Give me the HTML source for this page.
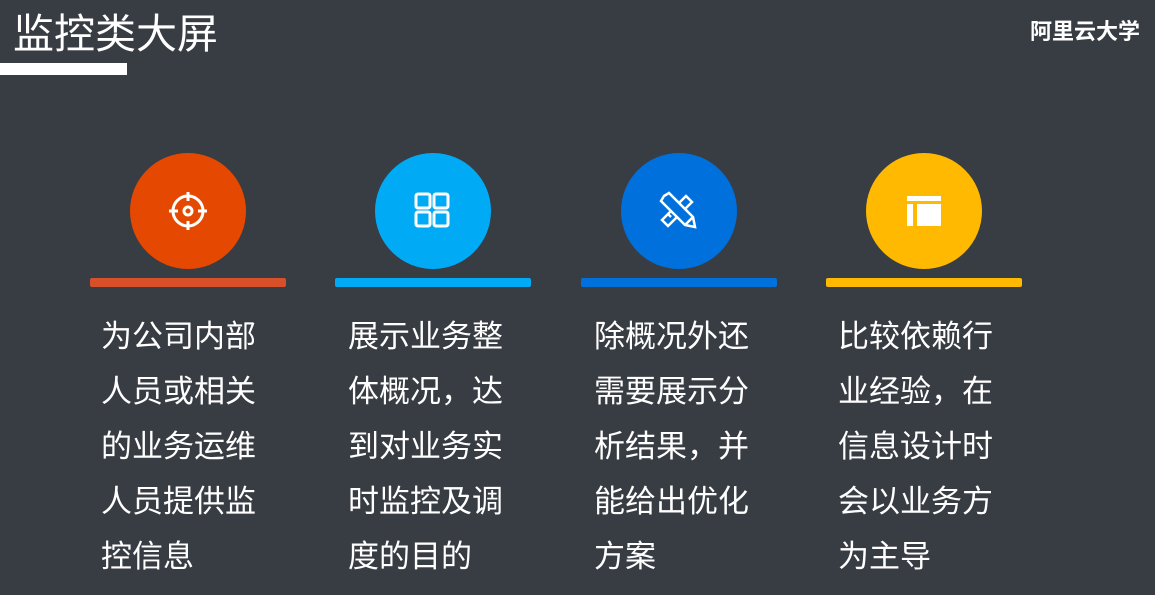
<!DOCTYPE html><html><head><meta charset="utf-8"><style>
body{margin:0;width:1155px;height:595px;background:#383c43;overflow:hidden;position:relative;font-family:"Liberation Sans","Noto Sans CJK SC",sans-serif;color:#fff}
.t{position:absolute;left:13px;top:0px;font-size:41px}
.ul{position:absolute;left:0;top:63px;width:127px;height:12px;background:#fff}
.br{position:absolute;right:15px;top:14px;font-size:22px;font-weight:bold}
.c{position:absolute;top:153px;width:116px;height:116px;border-radius:50%;display:flex;align-items:center;justify-content:center}
.b{position:absolute;top:278px;width:196px;height:9px;border-radius:2px}
.x{position:absolute;top:309px;font-size:31px;line-height:55px;width:180px}
</style></head><body>
<div class="t">监控类大屏</div><div class="ul"></div><div class="br">阿里云大学</div>
<div class="c" style="left:130px;background:#e54800"><svg width="44" height="44" viewBox="0 0 44 44" fill="none" stroke="#fff" stroke-width="3"><circle cx="22" cy="22" r="15"/><circle cx="22" cy="22" r="4"/><path d="M22 3v9M22 32v9M3 22h9M32 22h9"/></svg></div>
<div class="c" style="left:375px;background:#00aaf5"><svg width="40" height="40" viewBox="0 0 40 40" fill="none" stroke="#fff" stroke-width="3"><rect x="3" y="3" width="14" height="14" rx="2"/><rect x="21" y="3" width="14" height="14" rx="2"/><rect x="3" y="21" width="14" height="14" rx="2"/><rect x="21" y="21" width="14" height="14" rx="2"/></svg></div>
<div class="c" style="left:621px;background:#0070dd"><svg width="42" height="42" viewBox="0 0 42 42" fill="none" stroke="#fff" stroke-width="2.5"><path d="M4 30l24-24 6 6-24 24z"/><path d="M10 24l3 3M15 19l3 3M20 14l3 3"/><path d="M6 6l5-3 24 24 2 10-10-2-24-24z" fill="#0070dd"/><path d="M27 35l8-8"/></svg></div>
<div class="c" style="left:866px;background:#ffb900"><svg width="38" height="38" viewBox="0 0 38 38" fill="#fff"><rect x="2" y="4" width="34" height="5"/><rect x="2" y="12" width="6" height="22"/><rect x="12" y="12" width="24" height="22"/></svg></div>
<div class="b" style="left:90px;background:#d8502a"></div>
<div class="b" style="left:335px;background:#00aaf5"></div>
<div class="b" style="left:581px;background:#0070dd"></div>
<div class="b" style="left:826px;background:#ffb900"></div>
<div class="x" style="left:101px">为公司内部<br>人员或相关<br>的业务运维<br>人员提供监<br>控信息</div>
<div class="x" style="left:348px">展示业务整<br>体概况，达<br>到对业务实<br>时监控及调<br>度的目的</div>
<div class="x" style="left:594px">除概况外还<br>需要展示分<br>析结果，并<br>能给出优化<br>方案</div>
<div class="x" style="left:838px">比较依赖行<br>业经验，在<br>信息设计时<br>会以业务方<br>为主导</div>
</body></html>
